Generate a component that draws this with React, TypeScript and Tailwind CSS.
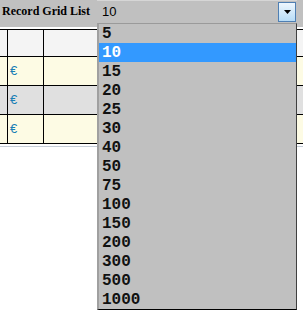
import React from 'react';

const OPTIONS = ['5', '10', '15', '20', '25', '30', '40', '50', '75', '100', '150', '200', '300', '500', '1000'];
const SELECTED = '10';

const ROWS = ['bg-[#fdfbe4]', 'bg-[#e0e0e0]', 'bg-[#fdfbe4]'];

export default function App() {
  return (
    <div className="relative w-[303px] h-[316px] bg-white overflow-hidden">
      {/* Toolbar */}
      <div className="h-[27px] bg-[#c0c0c0] flex items-start">
        <div className="w-[97px] pl-[2px] pt-[4px] text-[12px] leading-[14px] font-bold text-black font-['Liberation_Serif',serif]">
          Record Grid List
        </div>
        <div className="w-[200px] h-[22px] border-t border-[#d6d6d6] flex items-center justify-between bg-[#c0c0c0]">
          <span className="pl-[5px] text-[13px] text-black font-['Liberation_Sans',sans-serif]">{SELECTED}</span>
          <div className="w-[18px] h-[20px] mr-[1px] border border-[#4f7fb3] bg-gradient-to-b from-[#eef7fe] to-[#b7dcf6] flex items-center justify-center">
            <svg width="7" height="4" viewBox="0 0 7 4">
              <path d="M0 0h7L3.5 4z" fill="#000" />
            </svg>
          </div>
        </div>
      </div>

      {/* Grid */}
      <div className="mt-[2px] border-t border-black">
        <div className="grid grid-cols-[8px_36px_1fr] h-[27px] bg-[#f4f4f4] border-b border-black">
          <div className="border-r border-black" />
          <div className="border-r border-black" />
          <div />
        </div>
        {ROWS.map((bg, i) => (
          <div key={i} className={`grid grid-cols-[8px_36px_1fr] h-[29px] ${bg} border-b border-black`}>
            <div className="border-r border-black" />
            <div className="border-r border-black flex items-center pl-[2px] text-[13px] text-[#1a7fb5] font-['Liberation_Sans',sans-serif]">€</div>
            <div />
          </div>
        ))}
        <div className="mt-[2px] h-px bg-[#c6ced8]" />
      </div>

      {/* Open dropdown list */}
      <div className="absolute left-[97px] top-[23px] w-[200px] bg-[#c0c0c0] border-t border-[#9a9a9a] border-l-2 border-l-[#a0a0a0] border-r border-r-[#404040] border-b border-b-black">
        {OPTIONS.map((o) => (
          <div
            key={o}
            className={`h-[19px] pt-[2px] leading-[17px] pl-[3px] text-[16px] font-bold font-['Liberation_Mono',monospace] ${
              o === SELECTED ? 'bg-[#3399ff] text-white' : 'text-[#111]'
            }`}
          >
            {o}
          </div>
        ))}
      </div>
    </div>
  );
}
